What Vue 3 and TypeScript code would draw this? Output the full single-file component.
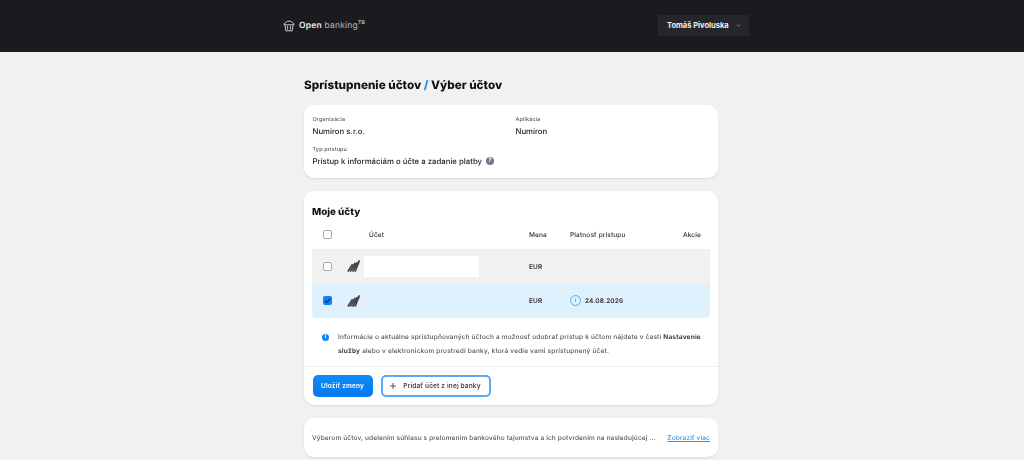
<script setup lang="ts">
interface AccountRow {
  id: number
  masked: boolean
  checked: boolean
  validTo: string
}

const rows: AccountRow[] = [
  { id: 1, masked: true, checked: false, validTo: '' },
  { id: 2, masked: false, checked: true, validTo: '24.08.2026' },
]
</script>

<template>
  <div class="page">
    <header class="topbar">
      <div class="topbar-inner">
        <div class="brand">
          <svg class="brand-icon" viewBox="0 0 12 12" fill="none" stroke="#c9c9cc" stroke-width="1">
            <path d="M1 4C2.500 2 4 1.200 6 1.200S9.500 2 11 4v.8H1z" />
            <path d="M2 5 2.800 10.800h6.400L10 5M4.600 6v3.500M7.400 6v3.500" />
          </svg>
          <span class="brand-text"><b>Open</b> banking<sup>TB</sup></span>
        </div>
        <button class="user">
          <span>Tomáš Pivoluska</span>
          <svg viewBox="0 0 8 5" width="5" height="3" fill="none" stroke="#a9a9ad" stroke-width="1.200">
            <path d="M1 1l3 3 3-3" />
          </svg>
        </button>
      </div>
    </header>

    <main class="content">
      <h1 class="title">Sprístupnenie účtov <i>/</i> Výber účtov</h1>

      <section class="card info">
        <div class="info-grid">
          <div>
            <div class="label">Organizácia</div>
            <div class="value">Numiron s.r.o.</div>
          </div>
          <div>
            <div class="label">Aplikácia</div>
            <div class="value">Numiron</div>
          </div>
        </div>
        <div class="label access">Typ prístupu</div>
        <div class="value">
          Prístup k informáciám o účte a zadanie platby
          <span class="help">?</span>
        </div>
      </section>

      <section class="card accounts">
        <h2 class="section-title">Moje účty</h2>
        <div class="table-row table-head">
          <span class="check-cell"><span class="box"></span></span>
          <span></span>
          <span class="head-text first">Účet</span>
          <span class="head-text">Mena</span>
          <span class="head-text">Platnosť prístupu</span>
          <span class="head-text right">Akcie</span>
        </div>
        <div
          v-for="row in rows"
          :key="row.id"
          class="table-row body-row"
          :class="{ selected: row.checked }"
        >
          <span class="check-cell">
            <span class="box" :class="{ on: row.checked }">
              <svg v-if="row.checked" viewBox="0 0 10 10" fill="none" stroke="#14243c" stroke-width="1.300">
                <path d="M2.500 5.400 4.200 7l3.400-3.800" />
              </svg>
            </span>
          </span>
          <svg class="bank" viewBox="0 0 14 12" fill="none" stroke="#45454f" stroke-width="1.900">
            <path d="M1 12 6 4M3.500 12 9 2.500M6 12 11.500 1.500M8.500 12 13.500 0" />
          </svg>
          <span class="acc-cell"><span v-if="row.masked" class="mask"></span></span>
          <span class="cell-text">EUR</span>
          <span class="validity">
            <template v-if="row.validTo">
              <span class="info-ring">i</span>
              <span class="cell-text">{{ row.validTo }}</span>
            </template>
          </span>
          <span></span>
        </div>

        <div class="note">
          <span class="note-icon">i</span>
          <p>
            Informácie o aktuálne sprístupňovaných účtoch a možnosť odobrať prístup k účtom nájdete v časti
            <b>Nastavenie</b> <b>služby</b> alebo v elektronickom prostredí banky, ktorá vedie vami sprístupnený účet.
          </p>
        </div>

        <div class="actions">
          <button class="btn primary">Uložiť zmeny</button>
          <button class="btn outline">
            <svg viewBox="0 0 8 8" width="6" height="6" stroke="#44444e" stroke-width="1.200" fill="none">
              <path d="M4 0v8M0 4h8" />
            </svg>
            Pridať účet z inej banky
          </button>
        </div>
      </section>

      <section class="card consent">
        <span class="consent-text">Výberom účtov, udelením súhlasu s prelomením bankového tajomstva a ich potvrdením na nasledujúcej ...</span>
        <a class="more">Zobraziť viac</a>
      </section>
    </main>
  </div>
</template>

<style>
html,
body {
  margin: 0;
  background: #f1f1f1;
  overflow: hidden;
}
</style>

<style scoped>
.page {
  height: 460px;
  overflow: hidden;
  font-family: Inter, "Liberation Sans", sans-serif;
  text-rendering: geometricPrecision;
  color: #1c1c20;
  will-change: opacity;
}
.topbar {
  height: 52px;
  background: #1b1b1f;
}
.topbar-inner {
  width: 466px;
  height: 100%;
  margin-left: 283px;
  display: flex;
  align-items: center;
  justify-content: space-between;
}
.brand {
  display: flex;
  align-items: center;
  gap: 4px;
}
.brand-icon {
  width: 12px;
  height: 12px;
}
.brand-text {
  color: #b9b9bc;
  font-size: 8.5px;
  letter-spacing: 0.2px;
}
.brand-text b {
  color: #e8e8ea;
  font-weight: 600;
}
.brand-text sup {
  font-size: 5px;
  font-weight: 700;
  line-height: 0;
  vertical-align: 4px;
}
.user {
  width: 91px;
  height: 21px;
  margin-top: -2px;
  padding: 0 8px 0 9px;
  border: 0;
  background: #25262b;
  color: #f0f0f0;
  font: 700 7.5px Inter, "Liberation Sans", sans-serif;
  display: flex;
  align-items: center;
  justify-content: space-between;
}
.content {
  width: 414px;
  margin-left: 304px;
  display: flex;
  flex-direction: column;
}
.title {
  margin: 26px 0 12px;
  font-size: 11.7px;
  line-height: 15px;
  font-weight: 800;
  color: #111;
}
.title i {
  font-style: normal;
  color: #1a8cff;
}
.card {
  background: #fff;
  border-radius: 10px;
  box-shadow: 0 1px 2px rgba(0, 0, 0, 0.1);
}
.info {
  height: 73px;
  box-sizing: border-box;
  padding: 12px 8px 0 8.5px;
  margin-bottom: 13px;
}
.info-grid {
  display: grid;
  grid-template-columns: 203px 1fr;
}
.label {
  font-size: 5.5px;
  font-weight: 500;
  line-height: 7px;
  letter-spacing: 0.12px;
  color: #5c5c66;
}
.value {
  margin-top: 2px;
  font-size: 7.8px;
  font-weight: 500;
  line-height: 10px;
  color: #26262c;
  display: flex;
  align-items: center;
  gap: 4px;
}
.access {
  margin-top: 11px;
}
.help {
  width: 8px;
  height: 8px;
  border-radius: 50%;
  background: #6f7790;
  color: #fff;
  font-size: 6px;
  font-weight: 700;
  line-height: 8px;
  text-align: center;
}
.accounts {
  height: 214px;
  box-sizing: border-box;
  padding: 16px 0 0;
  margin-bottom: 13px;
}
.section-title {
  margin: 0 8px 3px;
  font-size: 9.8px;
  line-height: 12px;
  font-weight: 800;
  color: #111;
}
.table-row {
  margin: 0 8px;
  display: grid;
  grid-template-columns: 30px 22px 165px 41px 1fr 40px;
  align-items: center;
  font-size: 6.5px;
  font-weight: 500;
  letter-spacing: 0.14px;
  color: #2c2c33;
}
.table-head {
  height: 24px;
  margin-bottom: 3px;
}
.head-text {
  padding-top: 1px;
}
.head-text.first {
  padding-left: 5px;
}
.right {
  text-align: right;
  padding-right: 9px;
}
.body-row {
  height: 34px;
  background: #f1f1f1;
}
.body-row.selected {
  height: 35px;
  background: #dff1fc;
  border-radius: 0 0 4px 4px;
}
.check-cell {
  display: flex;
  justify-content: center;
}
.box {
  width: 9px;
  height: 9px;
  box-sizing: border-box;
  border: 1px solid #a9a9ad;
  border-radius: 2px;
  background: #fff;
  display: block;
}
.box.on {
  border: 0;
  background: #0a84f5;
}
.box svg {
  display: block;
}
.bank {
  width: 13px;
  height: 12px;
  margin-left: 5px;
}
.acc-cell {
  display: block;
}
.mask {
  display: block;
  width: 115px;
  height: 21px;
  background: #fff;
}
.cell-text {
  padding-top: 1px;
  font-weight: 600;
  font-size: 6.5px;
  color: #2c2c33;
}
.validity {
  display: flex;
  align-items: center;
  gap: 4px;
}
.info-ring {
  width: 11px;
  height: 11px;
  box-sizing: border-box;
  border: 1px solid #52aef5;
  border-radius: 50%;
  color: #2e96ef;
  font-size: 6px;
  line-height: 9px;
  text-align: center;
}
.note {
  height: 49px;
  box-sizing: border-box;
  padding: 12px 12px 0 18px;
  display: flex;
  gap: 9px;
  border-bottom: 1px solid #eeeeee;
}
.note-icon {
  flex: none;
  width: 7px;
  height: 7px;
  margin-top: 4px;
  border-radius: 50%;
  background: #1586ee;
  color: #fff;
  font-size: 5.5px;
  font-weight: 700;
  line-height: 7px;
  text-align: center;
}
.note p {
  margin: 0;
  font-size: 6.5px;
  font-weight: 500;
  line-height: 14px;
  letter-spacing: 0.19px;
  color: #52525e;
}
.note b {
  color: #3c3c46;
}
.actions {
  padding: 8px 8px 0 8.5px;
  display: flex;
  gap: 8px;
}
.btn {
  height: 22px;
  box-sizing: border-box;
  border-radius: 5px;
  font: 600 6.5px Inter, "Liberation Sans", sans-serif;
  letter-spacing: 0.15px;
}
.primary {
  width: 60px;
  border: 0;
  background: linear-gradient(180deg, #0f8cf8, #0478ee);
  color: #fff;
}
.outline {
  width: 110px;
  border: 2px solid #56adf6;
  background: #fff;
  color: #44444e;
  display: flex;
  align-items: center;
  justify-content: center;
  gap: 7px;
}
.consent {
  height: 39px;
  box-sizing: border-box;
  padding: 0 8px 0 8px;
  display: flex;
  align-items: center;
  justify-content: space-between;
  font-size: 6.5px;
  font-weight: 500;
  letter-spacing: 0.15px;
}
.consent-text {
  color: #55555f;
}
.more {
  color: #2e96ef;
  text-decoration: underline;
}
</style>
